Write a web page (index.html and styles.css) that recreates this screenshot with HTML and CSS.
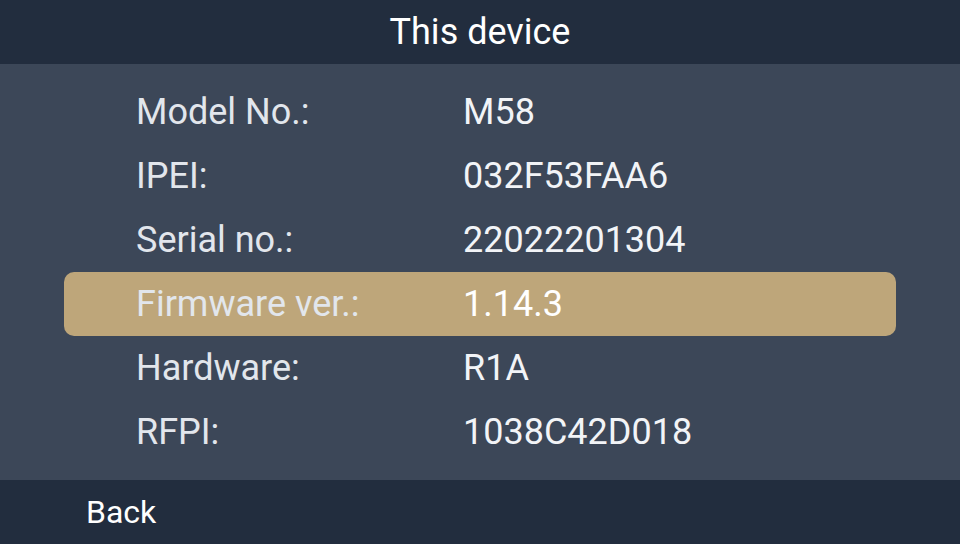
FILE: index.html
```html
<!DOCTYPE html>
<html>
<head>
<meta charset="utf-8">
<link rel="stylesheet" href="styles.css">
</head>
<body>
<div class="screen">
  <header class="top">This device</header>
  <main class="list">
    <div class="row"><span class="label">Model No.:</span><span class="value">M58</span></div>
    <div class="row"><span class="label">IPEI:</span><span class="value">032F53FAA6</span></div>
    <div class="row"><span class="label">Serial no.:</span><span class="value">22022201304</span></div>
    <div class="row selected"><span class="label">Firmware ver.:</span><span class="value">1.14.3</span></div>
    <div class="row"><span class="label">Hardware:</span><span class="value">R1A</span></div>
    <div class="row"><span class="label">RFPI:</span><span class="value">1038C42D018</span></div>
  </main>
  <footer class="bottom">Back</footer>
</div>
</body>
</html>
```
FILE: styles.css
```css
html, body {
  margin: 0;
  padding: 0;
}
body {
  width: 960px;
  height: 544px;
  overflow: hidden;
  font-family: Roboto, "Noto Sans", sans-serif;
  background: #3c4758;
}
.screen {
  display: flex;
  flex-direction: column;
  width: 960px;
  height: 544px;
}
.top {
  height: 64px;
  background: #222d3e;
  color: #ffffff;
  font-size: 36px;
  display: flex;
  align-items: center;
  justify-content: center;
}
.list {
  flex: 1;
  background: #3c4758;
  padding: 16px 64px;
  display: flex;
  flex-direction: column;
}
.row {
  height: 64px;
  display: flex;
  align-items: center;
  font-size: 36px;
  border-radius: 10px;
  padding-left: 72px;
}
.label {
  width: 327px;
  color: #e2e6ec;
}
.value {
  color: #f2f4f7;
}
.selected {
  background: #bea67a;
}
.selected .value {
  color: #ffffff;
}
.bottom {
  height: 64px;
  background: #222d3e;
  color: #ffffff;
  font-size: 32px;
  display: flex;
  align-items: center;
  padding-left: 86px;
}
```
